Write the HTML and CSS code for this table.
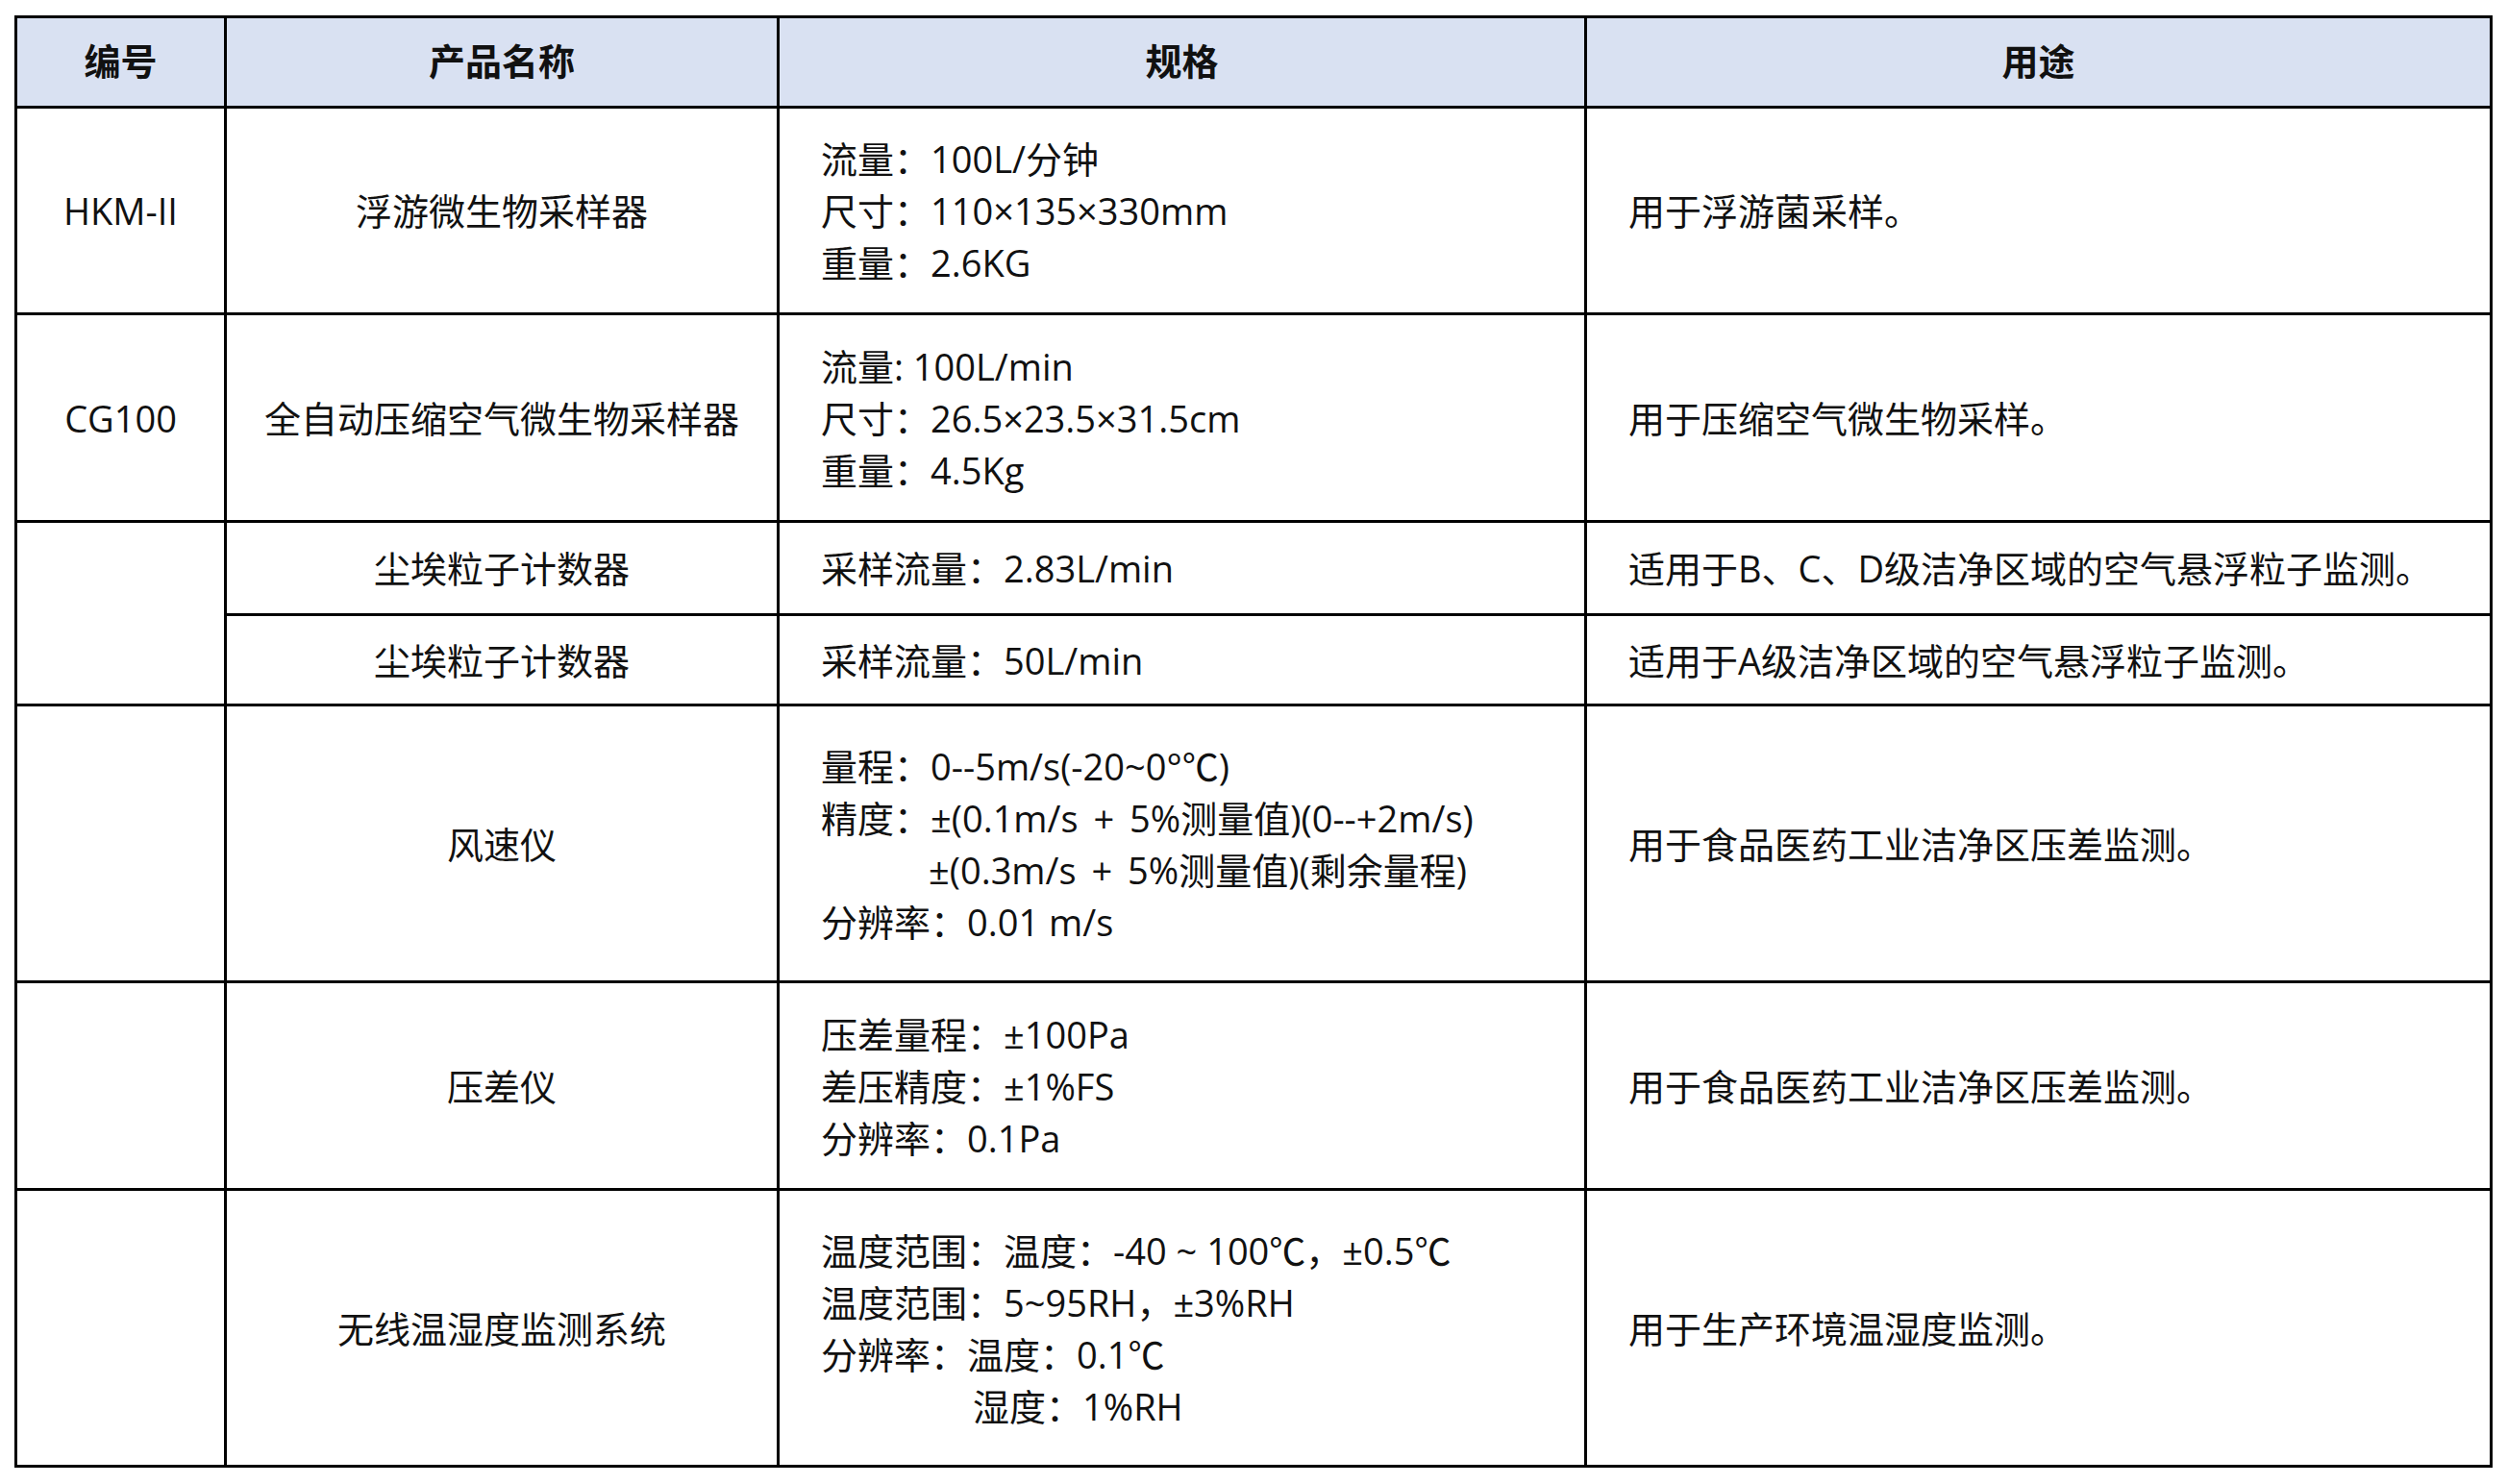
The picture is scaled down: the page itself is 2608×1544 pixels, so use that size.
FILE: index.html
```html
<!DOCTYPE html>
<html lang="zh-CN">
<head>
<meta charset="utf-8">
<title>产品表</title>
<link rel="stylesheet" href="styles.css">
</head>
<body>
<div class="page">
<table class="grid">
  <colgroup>
    <col class="c-no">
    <col class="c-name">
    <col class="c-spec">
    <col class="c-use">
  </colgroup>
  <thead>
    <tr class="r-head">
      <th>编号</th>
      <th>产品名称</th>
      <th>规格</th>
      <th>用途</th>
    </tr>
  </thead>
  <tbody>
    <tr class="r-3a">
      <td class="ctr">HKM-II</td>
      <td class="ctr">浮游微生物采样器</td>
      <td class="spec"><div>流量：100L/分钟</div><div>尺寸：110×135×330mm</div><div>重量：2.6KG</div></td>
      <td class="use">用于浮游菌采样。</td>
    </tr>
    <tr class="r-3b">
      <td class="ctr">CG100</td>
      <td class="ctr">全自动压缩空气微生物采样器</td>
      <td class="spec"><div>流量: 100L/min</div><div>尺寸：26.5×23.5×31.5cm</div><div>重量：4.5Kg</div></td>
      <td class="use">用于压缩空气微生物采样。</td>
    </tr>
    <tr class="r-1a">
      <td class="ctr" rowspan="2"></td>
      <td class="ctr">尘埃粒子计数器</td>
      <td class="spec"><div>采样流量：2.83L/min</div></td>
      <td class="use">适用于B、C、D级洁净区域的空气悬浮粒子监测。</td>
    </tr>
    <tr class="r-1b">
      <td class="ctr">尘埃粒子计数器</td>
      <td class="spec"><div>采样流量：50L/min</div></td>
      <td class="use">适用于A级洁净区域的空气悬浮粒子监测。</td>
    </tr>
    <tr class="r-4">
      <td class="ctr"></td>
      <td class="ctr">风速仪</td>
      <td class="spec"><div>量程：0--5m/s(-20~0°℃)</div><div>精度：±(0.1m/s<span class="gap"> + </span>5%测量值)(0--+2m/s)</div><div class="ind3">±(0.3m/s<span class="gap"> + </span>5%测量值)(剩余量程)</div><div>分辨率：0.01 m/s</div></td>
      <td class="use">用于食品医药工业洁净区压差监测。</td>
    </tr>
    <tr class="r-3c">
      <td class="ctr"></td>
      <td class="ctr">压差仪</td>
      <td class="spec"><div>压差量程：±100Pa</div><div>差压精度：±1%FS</div><div>分辨率：0.1Pa</div></td>
      <td class="use">用于食品医药工业洁净区压差监测。</td>
    </tr>
    <tr class="r-4">
      <td class="ctr"></td>
      <td class="ctr">无线温湿度监测系统</td>
      <td class="spec"><div>温度范围：温度：-40 ~ 100℃，±0.5℃</div><div>温度范围：5~95RH，±3%RH</div><div>分辨率：温度：0.1℃</div><div class="ind4">湿度：1%RH</div></td>
      <td class="use">用于生产环境温湿度监测。</td>
    </tr>
  </tbody>
</table>
</div>
</body>
</html>
```

FILE: styles.css
```css
html, body {
  margin: 0;
  padding: 0;
  background: #ffffff;
}

.page {
  padding: 16px 0 0 15px;
}

.grid {
  border-collapse: collapse;
  table-layout: fixed;
  width: 2575px;
  font-family: "Open Sans", "Noto Sans CJK SC", sans-serif;
  font-size: 38px;
  color: #111111;
}

.c-no { width: 218px; }
.c-name { width: 575px; }
.c-spec { width: 840px; }
.c-use { width: 942px; }

.grid th,
.grid td {
  border: 3px solid #000000;
  padding: 0;
  vertical-align: middle;
  line-height: 54px;
}

.grid th {
  background: #d9e1f2;
  font-family: "Noto Sans CJK SC", sans-serif;
  font-weight: 700;
  text-align: center;
  padding-bottom: 5px;
}

.r-head { height: 94px; }
.r-3a { height: 215px; }
.r-3b { height: 216px; }
.r-3c { height: 216px; }
.r-1a { height: 97px; }
.r-1b { height: 94px; }
.r-4 { height: 288px; }

.ctr {
  text-align: center;
}

.spec,
.use {
  text-align: left;
  padding-left: 43px !important;
}

.spec div {
  white-space: nowrap;
}

.gap {
  word-spacing: 6px;
}

.ind3 {
  padding-left: 112px;
}

.ind4 {
  padding-left: 158px;
}
```
